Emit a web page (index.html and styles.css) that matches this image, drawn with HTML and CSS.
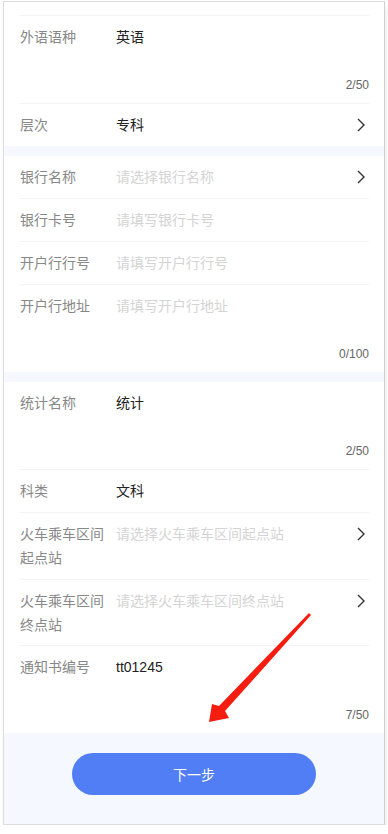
FILE: index.html
```html
<!DOCTYPE html>
<html lang="zh-CN">
<head>
  <meta charset="UTF-8" />
  <meta name="viewport" content="width=device-width, initial-scale=1.0"/>
  <title>填写信息</title>
  <link rel="stylesheet" href="styles.css">
</head>
<body>

  <div class="phone">

    <!-- 基本信息 -->
    <section class="group">
      <div class="stub"></div>

      <div class="cell cell-area">
        <div class="cell-main">
          <span class="label">外语语种</span>
          <span class="value">英语</span>
        </div>
        <div class="count">2/50</div>
      </div>

      <div class="cell">
        <div class="cell-main">
          <span class="label">层次</span>
          <span class="value">专科</span>
          <svg class="arrow-right" viewBox="0 0 8 14"><path d="M1 1l6 6-6 6" /></svg>
        </div>
      </div>
    </section>

    <!-- 银行信息 -->
    <section class="group">
      <div class="cell">
        <div class="cell-main">
          <span class="label">银行名称</span>
          <span class="value empty">请选择银行名称</span>
          <svg class="arrow-right" viewBox="0 0 8 14"><path d="M1 1l6 6-6 6" /></svg>
        </div>
      </div>

      <div class="cell">
        <div class="cell-main">
          <span class="label">银行卡号</span>
          <span class="value empty">请填写银行卡号</span>
        </div>
      </div>

      <div class="cell">
        <div class="cell-main">
          <span class="label">开户行行号</span>
          <span class="value empty">请填写开户行行号</span>
        </div>
      </div>

      <div class="cell cell-area">
        <div class="cell-main">
          <span class="label">开户行地址</span>
          <span class="value empty">请填写开户行地址</span>
        </div>
        <div class="count">0/100</div>
      </div>
    </section>

    <!-- 统计信息 -->
    <section class="group">
      <div class="cell cell-area">
        <div class="cell-main">
          <span class="label">统计名称</span>
          <span class="value">统计</span>
        </div>
        <div class="count">2/50</div>
      </div>

      <div class="cell">
        <div class="cell-main">
          <span class="label">科类</span>
          <span class="value">文科</span>
        </div>
      </div>

      <div class="cell cell-tall">
        <div class="cell-main">
          <span class="label">火车乘车区间起点站</span>
          <span class="value empty">请选择火车乘车区间起点站</span>
          <svg class="arrow-right" viewBox="0 0 8 14"><path d="M1 1l6 6-6 6" /></svg>
        </div>
      </div>

      <div class="cell cell-tall">
        <div class="cell-main">
          <span class="label">火车乘车区间终点站</span>
          <span class="value empty">请选择火车乘车区间终点站</span>
          <svg class="arrow-right" viewBox="0 0 8 14"><path d="M1 1l6 6-6 6" /></svg>
        </div>
      </div>

      <div class="cell cell-area">
        <div class="cell-main">
          <span class="label">通知书编号</span>
          <span class="value">tt01245</span>
        </div>
        <div class="count">7/50</div>
      </div>
    </section>

    <!-- 底部按钮 -->
    <footer class="footer">
      <button class="next-btn">下一步</button>
    </footer>

    <!-- 标注箭头 -->
    <svg class="mark" viewBox="0 0 388 834">
      <polygon points="309,613 311,615 225,711 229,718 209,722 212,704 219,706" />
    </svg>

  </div>

</body>
</html>
```

FILE: styles.css
```css
* {
  margin: 0;
  padding: 0;
  box-sizing: border-box;
}

body {
  background-color: #fff;
  font-family: "Liberation Sans", "Noto Sans CJK SC", sans-serif;
  font-size: 14px;
  color: #333;
  padding: 1px 3px 0;
}

.phone {
  position: relative;
  width: 382px;
  height: 824px;
  border: 1px solid #dcdcdc;
  border-right-color: #cfcfcf;
  background-color: #f5f8fe;
  box-shadow: 2px 6px 6px rgba(0, 0, 0, 0.07);
  overflow: hidden;
}

.group {
  background-color: #fff;
  margin-bottom: 10px;
}

.stub {
  height: 14px;
  margin: 0 15px 0 16px;
  border-bottom: 1px solid #f3f3f3;
}

.cell {
  margin: 0 15px 0 16px;
  padding: 9px 0;
  border-bottom: 1px solid #f3f3f3;
}

.cell-tall {
  padding-bottom: 8.5px;
}

.cell:last-child {
  border-bottom: none;
}

.cell-main {
  display: flex;
  align-items: flex-start;
  line-height: 24px;
}

.cell-area .cell-main {
  min-height: 51px;
}

.label {
  width: 96px;
  flex-shrink: 0;
  color: #888;
  padding-right: 4px;
}

.value {
  flex: 1;
  color: #222;
}

.value.empty {
  color: #d4d4d4;
}

.arrow-right {
  width: 8px;
  height: 14px;
  margin: 5px 4px 0 0;
  fill: none;
  stroke: #333;
  stroke-width: 1.4;
}

.count {
  text-align: right;
  font-size: 12px;
  line-height: 18px;
  color: #666;
}

.footer {
  display: flex;
  justify-content: center;
  padding-top: 10px;
}

.next-btn {
  width: 244px;
  height: 42px;
  border: none;
  border-radius: 21px;
  background-color: #517ef4;
  color: #fff;
  font-family: "Liberation Sans", "Noto Sans CJK SC", sans-serif;
  font-size: 14px;
  cursor: pointer;
}

.mark {
  position: absolute;
  top: -2px;
  left: -4px;
  width: 388px;
  height: 834px;
  pointer-events: none;
  fill: #f51d10;
}
```
